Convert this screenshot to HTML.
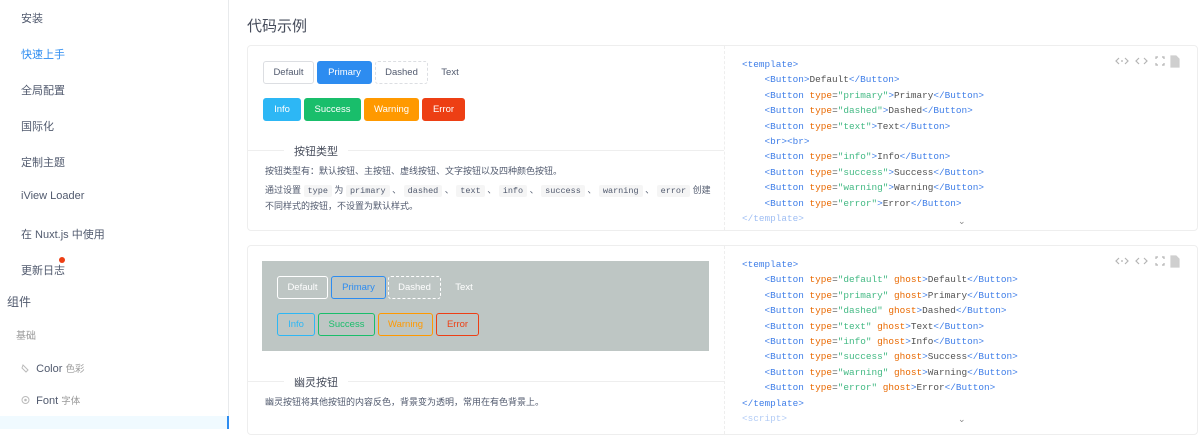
<!DOCTYPE html>
<html><head><meta charset="utf-8"><style>
*{box-sizing:border-box;margin:0;padding:0}
body{width:1200px;height:429px;overflow:hidden;background:#fff;font-family:"Liberation Sans","Noto Sans CJK SC",sans-serif;position:relative;color:#515a6e}
.side{position:absolute;left:0;top:0;width:229px;height:429px;border-right:1px solid #e8eaec}
.it{position:absolute;left:21px;font-size:11px;color:#515a6e}
.card{position:absolute;left:247px;width:951px;border:1px solid #eee;border-radius:4px}
.vd{position:absolute;left:476px;top:0;bottom:0;border-left:1px dashed #eee}
.btn{position:absolute;height:23px;line-height:21px;font-size:9.5px;text-align:center;border:1px solid #dcdee2;border-radius:3px;color:#515a6e;background:#fff}
.code{position:absolute;left:494px;font-family:"Liberation Mono",monospace;font-size:9.4px;line-height:15.4px;color:#525252;white-space:pre}
.t{color:#3f7ee8}.k{color:#e96900}.s{color:#42b983}
.ic{position:absolute;top:8px;right:10px}
.leg{position:absolute;left:36px;font-size:11px;color:#464c5b;background:#fff;padding:0 10px}
.hr{position:absolute;left:0;width:476px;border-top:1px solid #eee}
.desc{position:absolute;left:17px;font-size:9px;color:#515a6e;line-height:19px}
code{font-family:"Liberation Mono",monospace;background:#f5f5f5;padding:1px 4px;font-size:8.5px;border-radius:2px}
</style></head><body>
<div class="side">
<div class="it" style="top:10px">安装</div>
<div class="it" style="top:46px;color:#2d8cf0">快速上手</div>
<div class="it" style="top:82px">全局配置</div>
<div class="it" style="top:118px">国际化</div>
<div class="it" style="top:154px">定制主题</div>
<div class="it" style="top:190px">iView Loader</div>
<div class="it" style="top:226px">在 Nuxt.js 中使用</div>
<div class="it" style="top:262px">更新日志</div>
<div style="position:absolute;left:59px;top:257px;width:6px;height:6px;border-radius:50%;background:#ed3f14"></div>
<div style="position:absolute;left:7px;top:293px;font-size:12px;color:#515a6e">组件</div>
<div style="position:absolute;left:16px;top:327px;font-size:10px;color:#999">基础</div>
<div style="position:absolute;left:21px;top:361px;font-size:11px;color:#999"><svg width="9" height="10" style="vertical-align:-1px"><path d="M2 2l5 5-2 2-4-4z" fill="none" stroke="#bbb"/></svg> &nbsp;<span style="color:#515a6e">Color</span> <span style="font-size:9.5px">色彩</span></div>
<div style="position:absolute;left:21px;top:393px;font-size:11px;color:#999"><svg width="9" height="10" style="vertical-align:-1px"><circle cx="4.5" cy="5" r="3.5" fill="none" stroke="#bbb"/><circle cx="4.5" cy="5" r="1.3" fill="#bbb"/></svg> &nbsp;<span style="color:#515a6e">Font</span> <span style="font-size:9.5px">字体</span></div>
<div style="position:absolute;left:0;top:416px;width:229px;height:13px;background:#f0faff;border-right:2px solid #2d8cf0"></div>
</div>
<div style="position:absolute;left:247px;top:15px;font-size:15px;color:#464c5b">代码示例</div>

<div class="card" style="top:45px;height:186px">
<div class="vd"></div>
<div class="btn" style="left:15px;top:15px;width:51px">Default</div>
<div class="btn" style="left:69px;top:15px;width:55px;background:#2d8cf0;border-color:#2d8cf0;color:#fff">Primary</div>
<div class="btn" style="left:127px;top:15px;width:53px;border-style:dashed">Dashed</div>
<div class="btn" style="left:182px;top:15px;width:40px;border-color:transparent">Text</div>
<div class="btn" style="left:15px;top:52px;width:38px;background:#2db7f5;border-color:#2db7f5;color:#fff">Info</div>
<div class="btn" style="left:56px;top:52px;width:57px;background:#19be6b;border-color:#19be6b;color:#fff">Success</div>
<div class="btn" style="left:116px;top:52px;width:55px;background:#ff9900;border-color:#ff9900;color:#fff">Warning</div>
<div class="btn" style="left:174px;top:52px;width:43px;background:#ed3f14;border-color:#ed3f14;color:#fff">Error</div>
<div class="hr" style="top:104px"></div>
<div class="leg" style="top:97px">按钮类型</div>
<div class="desc" style="top:116px">按钮类型有：默认按钮、主按钮、虚线按钮、文字按钮以及四种颜色按钮。<br>通过设置 <code>type</code> 为 <code>primary</code> 、 <code>dashed</code> 、 <code>text</code> 、 <code>info</code> 、 <code>success</code> 、 <code>warning</code> 、 <code>error</code> 创建<br><span style="position:relative;top:-4px">不同样式的按钮，不设置为默认样式。</span></div>
<svg class="ic" width="72" height="14" viewBox="0 0 72 14" fill="none" stroke="#b5b5b5" stroke-width="1.2"><path d="M4 4L1 7l3 3M10 4l3 3-3 3M6 7h2"/><path d="M24 4l-3 3 3 3M29 4l3 3-3 3"/><path d="M41 5V3h2M47 3h2v2M49 9v2h-2M43 11h-2V9"/><path d="M56 2h5l3 3v8h-8z" fill="#cfcfcf" stroke="#cfcfcf"/></svg>
<div class="code" style="top:11px"><span class="t">&lt;template&gt;</span>
    <span class="t">&lt;Button&gt;</span>Default<span class="t">&lt;/Button&gt;</span>
    <span class="t">&lt;Button</span> <span class="k">type</span>=<span class="s">"primary"</span><span class="t">&gt;</span>Primary<span class="t">&lt;/Button&gt;</span>
    <span class="t">&lt;Button</span> <span class="k">type</span>=<span class="s">"dashed"</span><span class="t">&gt;</span>Dashed<span class="t">&lt;/Button&gt;</span>
    <span class="t">&lt;Button</span> <span class="k">type</span>=<span class="s">"text"</span><span class="t">&gt;</span>Text<span class="t">&lt;/Button&gt;</span>
    <span class="t">&lt;br&gt;&lt;br&gt;</span>
    <span class="t">&lt;Button</span> <span class="k">type</span>=<span class="s">"info"</span><span class="t">&gt;</span>Info<span class="t">&lt;/Button&gt;</span>
    <span class="t">&lt;Button</span> <span class="k">type</span>=<span class="s">"success"</span><span class="t">&gt;</span>Success<span class="t">&lt;/Button&gt;</span>
    <span class="t">&lt;Button</span> <span class="k">type</span>=<span class="s">"warning"</span><span class="t">&gt;</span>Warning<span class="t">&lt;/Button&gt;</span>
    <span class="t">&lt;Button</span> <span class="k">type</span>=<span class="s">"error"</span><span class="t">&gt;</span>Error<span class="t">&lt;/Button&gt;</span>
<span class="t" style="opacity:.5">&lt;/template&gt;</span></div>
<div style="position:absolute;left:710px;top:170px;font-size:9px;color:#888">⌄</div>
</div>

<div class="card" style="top:245px;height:190px">
<div class="vd"></div>
<div style="position:absolute;left:14px;top:15px;width:447px;height:90px;background:#bec6c4"></div>
<div class="btn" style="left:29px;top:30px;width:51px;background:transparent;border-color:#fff;color:#fff">Default</div>
<div class="btn" style="left:83px;top:30px;width:55px;background:transparent;border-color:#2d8cf0;color:#2d8cf0">Primary</div>
<div class="btn" style="left:140px;top:30px;width:53px;background:transparent;border-color:#fff;border-style:dashed;color:#fff">Dashed</div>
<div class="btn" style="left:196px;top:30px;width:40px;background:transparent;border-color:transparent;color:#fff">Text</div>
<div class="btn" style="left:29px;top:67px;width:38px;background:transparent;border-color:#2db7f5;color:#2db7f5">Info</div>
<div class="btn" style="left:70px;top:67px;width:57px;background:transparent;border-color:#19be6b;color:#19be6b">Success</div>
<div class="btn" style="left:130px;top:67px;width:55px;background:transparent;border-color:#ff9900;color:#ff9900">Warning</div>
<div class="btn" style="left:188px;top:67px;width:43px;background:transparent;border-color:#ed3f14;color:#ed3f14">Error</div>
<div class="hr" style="top:135px"></div>
<div class="leg" style="top:128px">幽灵按钮</div>
<div class="desc" style="top:147px">幽灵按钮将其他按钮的内容反色，背景变为透明，常用在有色背景上。</div>
<svg class="ic" width="72" height="14" viewBox="0 0 72 14" fill="none" stroke="#b5b5b5" stroke-width="1.2"><path d="M4 4L1 7l3 3M10 4l3 3-3 3M6 7h2"/><path d="M24 4l-3 3 3 3M29 4l3 3-3 3"/><path d="M41 5V3h2M47 3h2v2M49 9v2h-2M43 11h-2V9"/><path d="M56 2h5l3 3v8h-8z" fill="#cfcfcf" stroke="#cfcfcf"/></svg>
<div class="code" style="top:11px"><span class="t">&lt;template&gt;</span>
    <span class="t">&lt;Button</span> <span class="k">type</span>=<span class="s">"default"</span> <span class="k">ghost</span><span class="t">&gt;</span>Default<span class="t">&lt;/Button&gt;</span>
    <span class="t">&lt;Button</span> <span class="k">type</span>=<span class="s">"primary"</span> <span class="k">ghost</span><span class="t">&gt;</span>Primary<span class="t">&lt;/Button&gt;</span>
    <span class="t">&lt;Button</span> <span class="k">type</span>=<span class="s">"dashed"</span> <span class="k">ghost</span><span class="t">&gt;</span>Dashed<span class="t">&lt;/Button&gt;</span>
    <span class="t">&lt;Button</span> <span class="k">type</span>=<span class="s">"text"</span> <span class="k">ghost</span><span class="t">&gt;</span>Text<span class="t">&lt;/Button&gt;</span>
    <span class="t">&lt;Button</span> <span class="k">type</span>=<span class="s">"info"</span> <span class="k">ghost</span><span class="t">&gt;</span>Info<span class="t">&lt;/Button&gt;</span>
    <span class="t">&lt;Button</span> <span class="k">type</span>=<span class="s">"success"</span> <span class="k">ghost</span><span class="t">&gt;</span>Success<span class="t">&lt;/Button&gt;</span>
    <span class="t">&lt;Button</span> <span class="k">type</span>=<span class="s">"warning"</span> <span class="k">ghost</span><span class="t">&gt;</span>Warning<span class="t">&lt;/Button&gt;</span>
    <span class="t">&lt;Button</span> <span class="k">type</span>=<span class="s">"error"</span> <span class="k">ghost</span><span class="t">&gt;</span>Error<span class="t">&lt;/Button&gt;</span>
<span class="t">&lt;/template&gt;</span>
<span class="t" style="opacity:.4">&lt;script&gt;</span></div>
<div style="position:absolute;left:710px;top:168px;font-size:9px;color:#888">⌄</div>
</div>
</body></html>
